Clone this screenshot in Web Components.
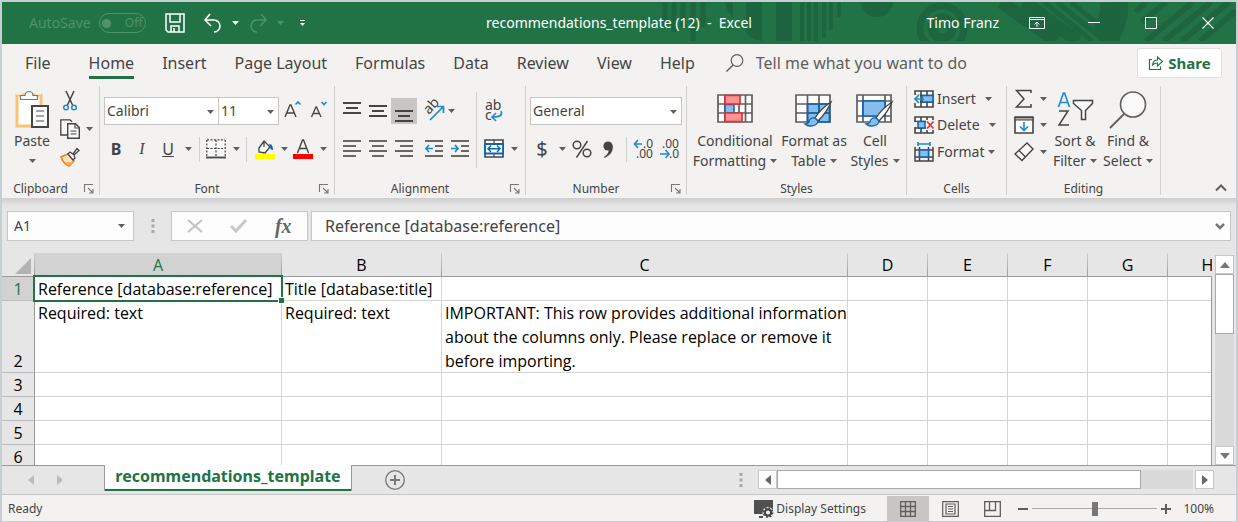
<!DOCTYPE html>
<html lang="en">
<head>
<meta charset="utf-8">
<title>recommendations_template (12) - Excel</title>
<style>
html, body { margin: 0; height: 100%; }
body { font-family: "Noto Sans", "Open Sans", sans-serif; font-size: 14px; line-height: 20px; color: #444; background: #c6d0d2; }
</style>
</head>
<body>
<excel-window></excel-window>
<script>
const BASE = `
  * { box-sizing: border-box; }
  :host { box-sizing: border-box; display: block; }
  :host([hidden]) { display: none; }
  button, select, input { font: inherit; color: inherit; margin: 0; padding: 0; border: 0; background: none; border-radius: 0; outline: none; appearance: none; }
  button { display: flex; align-items: center; justify-content: center; white-space: nowrap; }
`;

function define(name, css, html) {
  const template = document.createElement('template');
  template.innerHTML = `<style>${BASE}${css}</style>${html}`;
  customElements.define(name, class extends HTMLElement {
    constructor() {
      super();
      this.attachShadow({ mode: 'open' }).append(template.content.cloneNode(true));
    }
  });
}

/* Icon drawings: [width, height, markup] */
const G = '#444', L = '#605e5c', B = '#1e8bcd', D = '#0f63b0', F = '#83beec';
const lines = (list, colour) => `<path stroke="${colour}" stroke-width="2" d="${list.map(([x, y, w]) => `M${x} ${y}h${w}`).join('')}"/>`;
const brush = `<path d="M36 10C30 14 23 21 20 26l3 3c4-4 10-11 13-19z" fill="#fff" stroke="${G}" stroke-width="1.3"/><path d="M20 26c-4-1-6 2-6 4-1 2-2 2-4 2 3 3 12 3 13-3z" fill="${F}" stroke="${D}" stroke-width="1.3"/>`;
const ICONS = {
  arrow: [7, 4, `<path d="M0 0h7L3.500 4z" fill="currentColor"/>`],
  save: [20, 20, `<path d="M1 1h18v18H3l-2-2z M5 1v8h10V1 M6 19v-6h8v6 M9 15v4" fill="none" stroke="#fff" stroke-width="1.500"/>`],
  undo: [20, 20, `<path d="M7 1L2 7l6 6M2 7h9a6 6 0 0 1 0 12" fill="none" stroke="currentColor" stroke-width="1.600"/>`],
  redo: [20, 20, `<path d="M13 1l5 6-6 6M18 7H9a6 6 0 0 0 0 12" fill="none" stroke="currentColor" stroke-width="1.400"/>`],
  customize: [7, 6, `<path d="M1 .5h5" stroke="#fff"/><path d="M1 3h5L3.500 6z" fill="#fff"/>`],
  display: [16, 14, `<path d="M.5 1.500h15v11H.5zM.5 3.500h15M8 11V6M5.500 8.500L8 6l2.500 2.500" fill="none" stroke="#fff"/>`],
  min: [12, 12, `<path d="M0 5.500h12" stroke="#fff"/>`],
  max: [12, 12, `<path d="M.5.5h11v11H.5z" fill="none" stroke="#fff"/>`],
  close: [12, 12, `<path d="M.5.5l11 11M11.500.5l-11 11" stroke="#fff" stroke-width="1.200"/>`],
  search: [18, 18, `<circle cx="11" cy="6.500" r="5.800" fill="none" stroke="${L}" stroke-width="1.200"/><path d="M7 11L.5 17.500" stroke="${L}" stroke-width="1.400"/>`],
  share: [16, 16, `<path d="M4 4.500H1.500v10h11v-3" fill="none" stroke="#217346" stroke-width="1.200"/><path d="M4.500 10C5 6.500 7 5 9.500 5V2l5 4.500-5 4.500V8C7.500 8 6 8.500 4.500 10z" fill="none" stroke="#217346" stroke-width="1.100"/>`],
  paste: [34, 40, `<path d="M2 4h24v31H2z" fill="#fff" stroke="#f8c377" stroke-width="3"/><path d="M1 3h6M20 3h6" stroke="#fff"/><path d="M5.500 8.500v-4h4.500a4 4 0 0 1 8 0h4.500v4z" fill="#fafafa" stroke="#777" stroke-width="1.200"/><path d="M17 15h16v21H17z" fill="#fafafa" stroke="${G}" stroke-width="2"/><path d="M21 20h8M21 25h8M21 30h8" stroke="#888" stroke-width="1.300"/>`],
  cut: [16, 20, `<path d="M4 0l6.500 14M12 0L5.500 14" stroke="${G}" stroke-width="1.500"/><circle cx="4" cy="16.500" r="2.300" fill="none" stroke="${B}" stroke-width="1.500"/><circle cx="12" cy="16.500" r="2.300" fill="none" stroke="${B}" stroke-width="1.500"/>`],
  copy: [20, 20, `<path d="M7 16H.8V.8H10l2 2" fill="#fafafa" stroke="${G}" stroke-width="1.300"/><path d="M7.700 4.700h7.800l3.800 3.800v10.800H7.700z" fill="#fafafa" stroke="${G}" stroke-width="1.400"/><path d="M15 5v4h4M10.500 12h6M10.500 15h6" fill="none" stroke="${G}" stroke-width="1.100"/>`],
  painter: [20, 20, `<path d="M1 10l7-3 6 7-5 5c-3-1-6-4-8-9z" fill="#fde3c0" stroke="#ed7d20" stroke-width="1.600"/><path d="M5 15l4 4 4-4z" fill="#f5b55f"/><path d="M8 7l2-2 3 2 4-5.500 2 2L14 8l1 3-2 2z" fill="#fff" stroke="${G}" stroke-width="1.300"/>`],
  grow: [18, 22, `<path d="M1 17L6 5h1l5 12M3 13h7" fill="none" stroke="${G}" stroke-width="1.400"/><path d="M11.500 4.500L14 2l2.500 2.500" fill="none" stroke="${B}" stroke-width="1.700"/>`],
  shrink: [18, 22, `<path d="M1.500 17L6 7h.5L11 17M3 13.500h6.500" fill="none" stroke="${G}" stroke-width="1.300"/><path d="M11.500 2L14 4.500 16.500 2" fill="none" stroke="${B}" stroke-width="1.700"/>`],
  borders: [20, 20, `<path d="M1 1h18v16H1z" fill="#fafafa"/><path d="M1 .8h18M.8 1v16M19.200 1v16M10 1v16M1 9.500h18" stroke="${G}" stroke-width="1.200" stroke-dasharray="2 1.500" fill="none"/><path d="M0 18.500h20" stroke="${G}" stroke-width="1.800"/>`],
  fill: [20, 20, `<path d="M4 9L9 2l6 6-5 6-6-1z M9 2v6" fill="#fafafa" stroke="${G}" stroke-width="1.300"/><path d="M14 5c2 0 4 1 4 6-2 0-3-1-3-4z" fill="${D}"/><path d="M0 15h20v5H0z" fill="#ff0"/>`],
  fontcolour: [20, 20, `<path d="M4.500 14L9.500 1h1l5 13M6.500 9.500h7" fill="none" stroke="${G}" stroke-width="1.400"/><path d="M0 15h20v5H0z" fill="#f00"/>`],
  top: [18, 26, lines([[0, 5, 18], [3, 10, 12], [0, 15, 18]], G)],
  middle: [18, 26, lines([[0, 8, 18], [3, 13, 12], [0, 18, 18]], G)],
  bottom: [18, 26, lines([[0, 13, 18], [3, 18, 12], [0, 23, 18]], G)],
  left: [18, 18, lines([[0, 1, 18], [0, 6, 13], [0, 11, 18], [0, 16, 13]], '#6a6866')],
  centre: [18, 18, lines([[0, 1, 18], [3, 6, 12], [0, 11, 18], [3, 16, 12]], '#6a6866')],
  right: [18, 18, lines([[0, 1, 18], [5, 6, 13], [0, 11, 18], [5, 16, 13]], '#6a6866')],
  outdent: [18, 18, lines([[0, 1, 18], [10, 6, 8], [10, 11, 8], [0, 16, 18]], '#6a6866') + `<path d="M8 8.500H1M4 5L1 8.500 4 12" fill="none" stroke="${B}" stroke-width="1.700"/>`],
  indent: [18, 18, lines([[0, 1, 18], [10, 6, 8], [10, 11, 8], [0, 16, 18]], '#6a6866') + `<path d="M0 8.500h7M4 5l3 3.500L4 12" fill="none" stroke="${B}" stroke-width="1.700"/>`],
  orient: [24, 24, `<text x="0" y="0" font-size="14" fill="${G}" transform="translate(7 16) rotate(-48)">ab</text><path d="M8 21L21 8M15 7.500h6.500V14" fill="none" stroke="${B}" stroke-width="1.700"/>`],
  wrap: [20, 24, `<text x="1" y="11" font-size="14" fill="${G}">ab</text><text x="1" y="21" font-size="14" fill="${G}">c</text><path d="M17 12c2 4-1 6-8 6M12 14l-4 4 4 4" fill="none" stroke="${B}" stroke-width="1.600"/>`],
  merge: [20, 20, `<path d="M1 1h18v17H1z" fill="#fff" stroke="${G}" stroke-width="1.600"/><path d="M10 1v17" stroke="${G}" stroke-width="1.200"/><path d="M1 5h18v9.500H1z" fill="#fff" stroke="${D}" stroke-width="1.800"/><path d="M4 9.700h12M7 6.500L4 9.700 7 13M13 6.500l3 3.200L13 13" fill="none" stroke="${D}" stroke-width="1.400"/>`],
  incdec: [20, 22, `<path d="M9 6H1.500M5 2L1.500 6 5 10" fill="none" stroke="${B}" stroke-width="1.600"/><text x="10" y="10" font-size="12" fill="${G}">.0</text><text x="3" y="20" font-size="12" fill="${G}">.00</text>`],
  decdec: [20, 22, `<path d="M1 16h9M6.500 12l3.500 4-3.500 4" fill="none" stroke="${B}" stroke-width="1.600"/><text x="3" y="10" font-size="12" fill="${G}">.00</text><text x="10" y="20" font-size="12" fill="${G}">.0</text>`],
  comma: [12, 20, `<circle cx="6" cy="7" r="4.600" fill="${G}"/><path d="M10.600 6c1 6-2 10-8 13l-.6-1.200c4-2.300 5-4.800 4.600-8z" fill="${G}"/>`],
  percent: [20, 20, `<circle cx="5" cy="6" r="3.800" fill="none" stroke="${G}" stroke-width="1.500"/><circle cx="15" cy="14" r="3.800" fill="none" stroke="${G}" stroke-width="1.500"/><path d="M15.500 2L4.500 18.500" stroke="${G}" stroke-width="1.400"/>`],
  conditional: [36, 34, `<path d="M1 1h34v27H1zM8 1v27M22 1v27M28.500 1v27M1 10h34M1 19h34" fill="#fff" stroke="${L}" stroke-width="1.700"/><path d="M8 10.500h9V19H8z" fill="${F}" stroke="${D}" stroke-width="1.500"/><path d="M8 1.500h15V10H8zM8 19h17v8.500H8z" fill="#ff9295" stroke="#e03030" stroke-width="1.700"/>`],
  table: [38, 38, `<path d="M1 3h34v27H1z" fill="#fff"/><path d="M13 12h22v18H13z" fill="${F}"/><path d="M1 3h34v27H1zM12.500 3v27M24 3v27M1 12h34M1 21h34" fill="none" stroke="${L}" stroke-width="1.700"/><path d="M24 12v18M13 21h22M12.500 12v18h22V12z" fill="none" stroke="${D}" stroke-width="1.700"/>` + brush],
  cellstyle: [38, 38, `<path d="M1 3h34v27H1zM7 3v27M29 3v27M1 9h34M1 24h34" fill="#fff" stroke="${L}" stroke-width="1.700"/><path d="M7 9h22v15H7z" fill="${F}" stroke="${D}" stroke-width="1.700"/>` + brush],
  insert: [20, 18, `<path d="M1 1h18v16H1zM7 1v16M13 1v16M1 5.500h18M1 12h18" fill="#fff" stroke="${G}" stroke-width="1.600"/><path d="M8 5.500h11V12H8z" fill="${F}" stroke="${D}" stroke-width="1.500"/><path d="M0 5h6v8H0z" fill="#f3f2f1"/><path d="M10 9H1M5 5L1 9l4 4" fill="none" stroke="${B}" stroke-width="1.700"/>`],
  delete: [20, 18, `<path d="M1 1h18v16H1zM7 1v16M13 1v16M1 5.500h18M1 12h18" fill="#fff" stroke="${G}" stroke-width="1.600"/><path d="M12 4h8v10h-8zM0 6h3v5H0z" fill="#f3f2f1"/><path d="M4 5.500h7V12H4z" fill="${F}" stroke="${D}" stroke-width="1.500"/><path d="M13 5.500l6.500 7M19.500 5.500l-6.500 7" stroke="#e03030" stroke-width="1.600"/>`],
  format: [20, 20, `<path d="M4 2h12M4 0v4M16 0v4" stroke="${B}" stroke-width="1.600"/><path d="M1 5v14h18V5M5.500 5v14M14.500 5v14M1 8h18M1 15h18" fill="none" stroke="${G}" stroke-width="1.500"/><path d="M5.500 8h9v7h-9z" fill="${F}" stroke="${D}" stroke-width="1.500"/>`],
  sum: [18, 20, `<path d="M16 4V1.500H1.500L9 10l-7.500 8H16V15" fill="none" stroke="${G}" stroke-width="1.500"/>`],
  filldown: [20, 18, `<path d="M1 1h18v16H1z" fill="#fff" stroke="${G}" stroke-width="1.600"/><path d="M1 1.500h18V4H1z" fill="#aaa" stroke="${G}"/><path d="M10 6v8M6 10.500l4 4 4-4" fill="none" stroke="${B}" stroke-width="1.600"/>`],
  eraser: [20, 20, `<path d="M1 12L13 1l6 6L8 18.500z M5 8.500l6.500 6.500" fill="#fafafa" stroke="${G}" stroke-width="1.400"/>`],
  sort: [36, 40, `<path d="M1.500 16L6.500 2h1l5 14M3.500 11.500h7" fill="none" stroke="${B}" stroke-width="1.700"/><path d="M2 20h9L2 34h10" fill="none" stroke="${G}" stroke-width="1.500"/><path d="M16.500 9.500h19v3l-7 7v9h-4v-9l-8-7z" fill="#fafafa" stroke="${G}" stroke-width="1.500"/>`],
  find: [38, 40, `<circle cx="24" cy="13.500" r="12.500" fill="#fafafa" stroke="${L}" stroke-width="1.600"/><path d="M15 23L1 37" stroke="${L}" stroke-width="1.800"/>`],
  launcher: [10, 10, `<path d="M.5 8V.5H9M4 4l4.500 4.500M9 5v4H5" fill="none" stroke="#777" stroke-width="1.100"/>`],
  collapse: [12, 8, `<path d="M1 6.500L6 1.500l5 5" fill="none" stroke="${L}" stroke-width="2"/>`],
  expand: [10, 6, `<path d="M1 1l4 4 4-4" fill="none" stroke="#777" stroke-width="2.500"/>`],
  cancel: [16, 14, `<path d="M1 1l14 12M15 1L1 13" stroke="#c3c3c3" stroke-width="2"/>`],
  enter: [18, 14, `<path d="M1 7l5 5L16 1" fill="none" stroke="#c8c8c8" stroke-width="3"/>`],
  grip: [4, 14, `<path d="M.5 0h3v3h-3zM.5 5.500h3v3h-3zM.5 11h3v3h-3z" fill="#a8a8a8"/>`],
  corner: [16, 16, `<path d="M16 0v16H0z" fill="#b3b3b3"/>`],
  up: [10, 6, `<path d="M0 6h10L5 0z" fill="#777"/>`],
  down: [10, 6, `<path d="M0 0h10L5 6z" fill="#777"/>`],
  prev: [6, 10, `<path d="M6 0v10L0 5z" fill="currentColor"/>`],
  next: [6, 10, `<path d="M0 0v10l6-5z" fill="currentColor"/>`],
  add: [20, 20, `<circle cx="10" cy="10" r="9.300" fill="none" stroke="#777" stroke-width="1.300"/><path d="M5 10h10M10 5v10" stroke="#777" stroke-width="2"/>`],
  monitor: [20, 18, `<path d="M0 0h19v14H0zM5 16h4v2H5z" fill="#505050"/><circle cx="14" cy="12.500" r="5.500" fill="#f3f2f1"/><circle cx="14" cy="12.500" r="3.200" fill="none" stroke="#444" stroke-width="2.200"/><circle cx="14" cy="12.500" r="4.600" fill="none" stroke="#444" stroke-width="1.600" stroke-dasharray="1.800 1.800"/>`],
  normal: [16, 16, `<path d="M.7.7h14.600v14.600H.7zM5.500.5v15M10.500.5v15M.5 5.500h15M.5 10.500h15" fill="none" stroke="#605e5c" stroke-width="1.300"/>`],
  page: [17, 16, `<path d="M.7.7h15.600v14.600H.7zM4 3h9v10H4zM6 5.500h5M6 8h5M6 10.500h5" fill="none" stroke="#605e5c" stroke-width="1.200"/>`],
  break: [17, 16, `<path d="M.7.7h15.600v14.600H.7zM5.500.5v9M.5 9.500H11.500V.5" fill="none" stroke="#605e5c" stroke-width="1.300"/>`]
};

customElements.define('ui-icon', class extends HTMLElement {
  constructor() {
    super();
    this.attachShadow({ mode: 'open' });
  }
  connectedCallback() {
    const [w, h, body] = ICONS[this.getAttribute('name')];
    this.shadowRoot.innerHTML = `<style>:host{display:block;flex:none}svg{display:block;overflow:visible;font-family:"Noto Sans",sans-serif}</style>
      <svg width="${w}" height="${h}" viewBox="0 0 ${w} ${h}" aria-hidden="true">${body}</svg>`;
  }
});

define('title-bar', `
  :host { position: relative; display: flex; align-items: center; height: 42px; background: #217346; color: #fff; overflow: hidden; }
  .art { position: absolute; right: 0; top: 0; }
  .side { position: relative; flex: 1 1 0; display: flex; align-items: center; }
  .title { position: relative; white-space: pre; }
  .dim { color: #4e9469; }
  .auto { margin-left: 27px; }
  .toggle { width: 47px; height: 20px; margin: 0 16px 0 8px; border: 1px solid #4e9469; border-radius: 10px; color: #4e9469; font-size: 12px; gap: 14px; }
  .toggle::before { content: ""; width: 9px; height: 9px; border-radius: 50%; background: #4e9469; }
  .q { width: 26px; height: 30px; }
  .undo { margin-left: 12px; }
  .a { width: 19px; height: 30px; }
  .right { justify-content: flex-end; }
  .user { margin-right: 9px; }
  .w { width: 57px; height: 42px; }
`, `
  <svg class="art" width="580" height="39" viewBox="0 0 580 39" fill="none" stroke="#1c653f" aria-hidden="true">
    <path stroke-width="5" d="M9 0v25M18 0v30M27 0v25M37 0v39M47 0v25"/>
    <path fill="#1c653f" stroke="none" d="M69 0h8v16q-6-6-8-16zM90 0h16v39q-12-1-16-10zM120 0h16v39h-16zM205 0h32q-2 15-16 15T205 0z"/>
    <path stroke-width="4" d="M146 0v39M153 0v39M160 0v39M168 0v36M175 0v28M183 0v15"/>
    <circle cx="286" cy="26" r="22" stroke-width="7"/>
    <circle cx="286" cy="26" r="10" stroke-width="9"/>
    <path stroke-width="13" d="M345 0l55 39M368 0l54 39"/><path stroke-width="5" d="M388 0l48 39M401 0l48 39M415 0l48 39"/>
    <path stroke-width="28" d="M458 0q2 22-14 39"/>
    <path stroke-width="6" d="M480 10L490 0M486 20L510 0M490 39L537 0M508 39L555 0M526 39L573 0M544 39L580 9"/>
  </svg>
  <div class="side">
    <span class="auto dim">AutoSave</span>
    <button class="toggle" role="switch" aria-checked="false" aria-label="AutoSave">Off</button>
    <button class="q" aria-label="Save"><ui-icon name="save"></ui-icon></button>
    <button class="q undo" aria-label="Undo"><ui-icon name="undo"></ui-icon></button>
    <button class="a" aria-label="Undo history"><ui-icon name="arrow"></ui-icon></button>
    <button class="q dim" aria-label="Redo"><ui-icon name="redo"></ui-icon></button>
    <button class="a dim" aria-label="Redo history"><ui-icon name="arrow"></ui-icon></button>
    <button class="q" aria-label="Customize Quick Access Toolbar"><ui-icon name="customize"></ui-icon></button>
  </div>
  <div class="title">recommendations_template (12)  -  Excel</div>
  <div class="side right">
    <span class="user">Timo Franz</span>
    <button class="w" aria-label="Ribbon Display Options"><ui-icon name="display"></ui-icon></button>
    <button class="w" aria-label="Minimize"><ui-icon name="min"></ui-icon></button>
    <button class="w" aria-label="Maximize"><ui-icon name="max"></ui-icon></button>
    <button class="w" aria-label="Close"><ui-icon name="close"></ui-icon></button>
  </div>
`);

define('ribbon-tabs', `
  :host { display: flex; align-items: center; height: 41px; padding: 0 14px 4px 9px; background: #f3f2f1; font-size: 16px; line-height: 24px; }
  nav { display: flex; }
  a { color: inherit; text-decoration: none; padding: 0 14px; white-space: nowrap; }
  a:first-child { margin-right: 10px; }
  a span { display: block; padding: 5px 0 0; border-bottom: 3px solid transparent; height: 33px; }
  a[aria-current] span { border-color: #217346; }
  .tell { gap: 12px; margin-left: 17px; color: #605e5c; }
  .share { margin-left: auto; width: 85px; height: 30px; gap: 4px; background: #fff; border: 1px solid #e1dfdd; border-radius: 3px; color: #217346; font-weight: 700; font-size: 15px; }
`, `
  <nav>
    <a href="#file"><span>File</span></a><a href="#home" aria-current="page"><span>Home</span></a><a href="#insert"><span>Insert</span></a><a href="#layout"><span>Page Layout</span></a><a href="#formulas"><span>Formulas</span></a><a href="#data"><span>Data</span></a><a href="#review"><span>Review</span></a><a href="#view"><span>View</span></a><a href="#help"><span>Help</span></a>
  </nav>
  <button class="tell"><ui-icon name="search"></ui-icon>Tell me what you want to do</button>
  <button class="share"><ui-icon name="share"></ui-icon>Share</button>
`);

define('ribbon-group', `
  :host { flex: none; display: flex; flex-direction: column; background: linear-gradient(#d2d0ce, #d2d0ce) right top / 1px 109px no-repeat; padding-right: 1px; }
  .body { flex: 1; }
  .foot { display: flex; align-items: center; height: 19px; font-size: 12px; line-height: 16px; }
  .name { flex: 1; text-align: center; }
  .launch { width: 20px; height: 18px; }
  :host(:not([launcher])) .launch { display: none; }
`, `
  <div class="body"><slot></slot></div>
  <div class="foot"><span class="name"><slot name="label"></slot></span><button class="launch" aria-label="Dialog box launcher"><ui-icon name="launcher"></ui-icon></button></div>
`);

define('combo-box', `
  :host { position: relative; display: block; height: 28px; background: #fff; border: 1px solid #c8c6c4; }
  ui-icon { position: absolute; right: 4px; top: 12px; color: #605e5c; pointer-events: none; }
`, `<slot></slot><ui-icon name="arrow"></ui-icon>`);

define('excel-ribbon', `
  :host { display: flex; height: 113px; padding: 1px 0 0; background: #f3f2f1; }
  ui-icon[name=arrow] { color: #605e5c; }
  combo-box select { display: block; width: 100%; height: 26px; padding: 0 2px; }
  .clip { width: 98px; } .font { width: 235px; } .align { width: 191px; } .num { width: 161px; } .styles { width: 220px; } .cells { width: 100px; } .edit { width: 154px; }
  .row { display: grid; align-items: center; height: 28px; }
  .row button { height: 26px; }
  .stack { display: flex; flex-direction: column; gap: 10px; padding: 11px 4px 0; }
  .sep { justify-self: center; width: 1px; height: 25px; background: #d2d0ce; }
  .h { display: flex; }
  .clip .h, .styles .h { padding-left: 4px; }
  .edit .h { padding-left: 3px; }
  .big { flex-direction: column; justify-content: flex-start; padding-top: 5px; }
  .big .pic { display: flex; align-items: center; justify-content: center; height: 40px; }
  .big .line { display: flex; align-items: center; gap: 4px; height: 20px; }
  .small { display: grid; grid-template-columns: 24px 14px; grid-auto-rows: 28px; padding-top: 1px; }
  .font .second { grid-template-columns: 24px 28px 24px 16px 7px 26px 14px 7px 30px 8px 30px 10px; }
  .font .first { grid-template-columns: 115px 60px 28px 24px; }
  .first combo-box + combo-box { margin-left: -1px; }
  .glyph { font-size: 16px; }
  .align .stack > .row { grid-template-columns: 26px 26px 26px 4px 26px 8px; }
  .align .last { padding: 11px 0 0; }
  .align .last .row { grid-template-columns: 28px 12px; }
  .align .tall { height: 76px; width: 1px; background: #d2d0ce; margin: 6px 3px 0 0; }
  .align .stack:first-child { width: 141px; padding-right: 0; }
  .pressed { background: #c8c6c4; }
  .num .row { grid-template-columns: 24px 16px 24px 28px 8px 26px 26px; }
  .cells .list { display: grid; grid-template-rows: 25px 27px 27px; justify-items: start; padding: 0 0 0 7px; }
  .cells button { gap: 3px; }
  .cells ui-icon[name=arrow] { margin-left: 6px; }
  .cells .near ui-icon[name=arrow] { margin-left: 0; }
  .edit .small { grid-template: 25px 27px 27px / 28px 10px; padding: 0; }
  .rest { flex: 1; display: flex; justify-content: flex-end; align-items: flex-end; padding: 0 9px 3px 0; }
`, `
  <ribbon-group class="clip" launcher><span slot="label">Clipboard</span>
    <div class="h">
      <button class="big" style="width:52px"><span class="pic"><ui-icon name="paste"></ui-icon></span><span class="line">Paste</span><span class="line"><ui-icon name="arrow"></ui-icon></span></button>
      <div class="small">
        <button aria-label="Cut"><ui-icon name="cut"></ui-icon></button><span></span>
        <button aria-label="Copy"><ui-icon name="copy"></ui-icon></button><button aria-label="Copy options"><ui-icon name="arrow"></ui-icon></button>
        <button aria-label="Format Painter"><ui-icon name="painter"></ui-icon></button>
      </div>
    </div>
  </ribbon-group>
  <ribbon-group class="font" launcher><span slot="label">Font</span>
    <div class="stack">
      <div class="row first">
        <combo-box><select aria-label="Font"><option>Calibri</option></select></combo-box>
        <combo-box><select aria-label="Font size"><option>11</option></select></combo-box>
        <button aria-label="Increase font size"><ui-icon name="grow"></ui-icon></button>
        <button aria-label="Decrease font size"><ui-icon name="shrink"></ui-icon></button>
      </div>
      <div class="row second">
        <button class="glyph" style="font-weight:700">B</button>
        <button class="glyph" style="font-family:'Liberation Serif',serif;font-style:italic">I</button>
        <button class="glyph" style="text-decoration:underline">U</button>
        <button aria-label="Underline options"><ui-icon name="arrow"></ui-icon></button>
        <span class="sep"></span>
        <button aria-label="Borders"><ui-icon name="borders"></ui-icon></button>
        <button aria-label="Border options"><ui-icon name="arrow"></ui-icon></button>
        <span class="sep"></span>
        <button aria-label="Fill color"><ui-icon name="fill"></ui-icon></button>
        <button aria-label="Fill color options"><ui-icon name="arrow"></ui-icon></button>
        <button aria-label="Font color"><ui-icon name="fontcolour"></ui-icon></button>
        <button aria-label="Font color options"><ui-icon name="arrow"></ui-icon></button>
      </div>
    </div>
  </ribbon-group>
  <ribbon-group class="align" launcher><span slot="label">Alignment</span>
    <div class="h">
      <div class="stack">
        <div class="row">
          <button aria-label="Top align"><ui-icon name="top"></ui-icon></button>
          <button aria-label="Middle align"><ui-icon name="middle"></ui-icon></button>
          <button class="pressed" aria-pressed="true" aria-label="Bottom align"><ui-icon name="bottom"></ui-icon></button>
          <span></span>
          <button aria-label="Orientation"><ui-icon name="orient"></ui-icon></button>
          <button aria-label="Orientation options"><ui-icon name="arrow"></ui-icon></button>
        </div>
        <div class="row">
          <button aria-label="Align left"><ui-icon name="left"></ui-icon></button>
          <button aria-label="Center"><ui-icon name="centre"></ui-icon></button>
          <button aria-label="Align right"><ui-icon name="right"></ui-icon></button>
          <span></span>
          <button aria-label="Decrease indent"><ui-icon name="outdent"></ui-icon></button>
          <button aria-label="Increase indent" style="width:26px"><ui-icon name="indent"></ui-icon></button>
        </div>
      </div>
      <span class="tall"></span>
      <div class="stack last">
        <div class="row"><button aria-label="Wrap text"><ui-icon name="wrap"></ui-icon></button></div>
        <div class="row"><button aria-label="Merge and center"><ui-icon name="merge"></ui-icon></button><button aria-label="Merge options"><ui-icon name="arrow"></ui-icon></button></div>
      </div>
    </div>
  </ribbon-group>
  <ribbon-group class="num" launcher><span slot="label">Number</span>
    <div class="stack">
      <combo-box><select aria-label="Number format"><option>General</option></select></combo-box>
      <div class="row">
        <button style="font-size:20px">$</button>
        <button aria-label="Accounting format options"><ui-icon name="arrow"></ui-icon></button>
        <button aria-label="Percent style"><ui-icon name="percent"></ui-icon></button>
        <button aria-label="Comma style"><ui-icon name="comma"></ui-icon></button>
        <span class="sep"></span>
        <button aria-label="Increase decimal"><ui-icon name="incdec"></ui-icon></button>
        <button aria-label="Decrease decimal"><ui-icon name="decdec"></ui-icon></button>
      </div>
    </div>
  </ribbon-group>
  <ribbon-group class="styles"><span slot="label">Styles</span>
    <div class="h">
      <button class="big" style="width:88px"><span class="pic"><ui-icon name="conditional"></ui-icon></span><span class="line">Conditional</span><span class="line">Formatting <ui-icon name="arrow"></ui-icon></span></button>
      <button class="big" style="width:70px"><span class="pic"><ui-icon name="table"></ui-icon></span><span class="line">Format as</span><span class="line">Table <ui-icon name="arrow"></ui-icon></span></button>
      <button class="big" style="width:52px"><span class="pic"><ui-icon name="cellstyle"></ui-icon></span><span class="line">Cell</span><span class="line">Styles <ui-icon name="arrow"></ui-icon></span></button>
    </div>
  </ribbon-group>
  <ribbon-group class="cells"><span slot="label">Cells</span>
    <div class="list">
      <button><ui-icon name="insert"></ui-icon>Insert <ui-icon name="arrow"></ui-icon></button>
      <button><ui-icon name="delete"></ui-icon>Delete <ui-icon name="arrow"></ui-icon></button>
      <button class="near"><ui-icon name="format"></ui-icon>Format <ui-icon name="arrow"></ui-icon></button>
    </div>
  </ribbon-group>
  <ribbon-group class="edit"><span slot="label">Editing</span>
    <div class="h">
      <div class="small">
        <button aria-label="AutoSum"><ui-icon name="sum"></ui-icon></button><button aria-label="AutoSum options"><ui-icon name="arrow"></ui-icon></button>
        <button aria-label="Fill"><ui-icon name="filldown"></ui-icon></button><button aria-label="Fill options"><ui-icon name="arrow"></ui-icon></button>
        <button aria-label="Clear"><ui-icon name="eraser"></ui-icon></button><button aria-label="Clear options"><ui-icon name="arrow"></ui-icon></button>
      </div>
      <button class="big" style="width:54px"><span class="pic"><ui-icon name="sort"></ui-icon></span><span class="line">Sort &amp;</span><span class="line">Filter <ui-icon name="arrow"></ui-icon></span></button>
      <button class="big" style="width:52px"><span class="pic"><ui-icon name="find"></ui-icon></span><span class="line">Find &amp;</span><span class="line">Select <ui-icon name="arrow"></ui-icon></span></button>
    </div>
  </ribbon-group>
  <div class="rest"><button aria-label="Collapse the ribbon" style="height:14px"><ui-icon name="collapse"></ui-icon></button></div>
`);

define('formula-bar', `
  :host { display: flex; height: 55px; padding: 13px 5px 12px; background: linear-gradient(#cecece, #e6e6e6 8px); }
  .box { display: flex; align-items: center; border: 1px solid #c6c6c6; background: #fdfdfd; }
  .name { width: 127px; padding: 0 8px 0 6px; }
  .name input { flex: 1; min-width: 0; }
  .name button { color: #605e5c; }
  .grip { width: 37px; display: flex; align-items: center; justify-content: center; }
  .tools { width: 137px; justify-content: space-around; padding: 0 2px; }
  .fx { font: italic 700 20px/20px "Liberation Serif", serif; color: #666; }
  .formula { flex: 1; margin-left: 3px; padding: 0 5px 0 13px; }
  .formula input { flex: 1; min-width: 0; font-size: 16px; }
`, `
  <div class="box name"><input aria-label="Name box" value="A1"><button aria-label="Name list"><ui-icon name="arrow"></ui-icon></button></div>
  <span class="grip"><ui-icon name="grip"></ui-icon></span>
  <div class="box tools"><button aria-label="Cancel"><ui-icon name="cancel"></ui-icon></button><button aria-label="Enter"><ui-icon name="enter"></ui-icon></button><button class="fx" aria-label="Insert function">fx</button></div>
  <div class="box formula"><input aria-label="Formula" value="Reference [database:reference]"><button aria-label="Expand formula bar"><ui-icon name="expand"></ui-icon></button></div>
`);

define('scroll-bar', `
  :host { display: flex; }
  :host([vertical]) { flex-direction: column; width: 19px; }
  :host(:not([vertical])) { height: 19px; }
  button { flex: none; width: 19px; height: 19px; background: #fff; border: 1px solid #c6c6c6; color: #666; }
  .track { flex: 1; min-width: 0; min-height: 0; background: #dadada; }
  .thumb { background: #fff; border: 1px solid #aaa; }
  :host([vertical]) .thumb { height: 60px; }
  :host(:not([vertical])) .thumb { height: 19px; width: 364px; }
  :host([vertical]) .x, :host(:not([vertical])) .y { display: none; }
  :host(:not([vertical])) .track { margin-right: 2px; }
`, `
  <button aria-label="Scroll back"><ui-icon class="y" name="up"></ui-icon><ui-icon class="x" name="prev"></ui-icon></button>
  <div class="track"><div class="thumb"></div></div>
  <button aria-label="Scroll forward"><ui-icon class="y" name="down"></ui-icon><ui-icon class="x" name="next"></ui-icon></button>
`);

define('sheet-grid', `
  :host { display: flex; flex: 1; min-height: 0; background: #e6e6e6; padding-right: 2px; }
  .view { flex: 1; min-width: 0; overflow: hidden; position: relative; }
  .view::after { content: ""; position: absolute; right: 0; top: 23px; bottom: 0; width: 1px; background: #999; }
  table { table-layout: fixed; width: 1246px; border-collapse: separate; border-spacing: 0; background: #fff; color: #000; font: 16px/24px "Open Sans", "Noto Sans", sans-serif; }
  th { font-weight: 400; padding: 2px 0 0; line-height: 21px; background: #e6e6e6; border-right: 1px solid #999; border-bottom: 1px solid #bbb; }
  thead th { height: 24px; border: solid; border-image: linear-gradient(#d0d0d0, #999) 1; border-width: 0 1px 1px 0; }
  tbody th { vertical-align: bottom; }
  .on { background: #d2d2d2; color: #217346; }
  td { position: relative; vertical-align: top; padding: 2px 0 0 3px; border-right: 1px solid #d4d4d4; border-bottom: 1px solid #d4d4d4; height: 24px; line-height: 21px; white-space: nowrap; }
  tbody tr { height: 24px; }
  .note td { white-space: normal; padding-top: 0; line-height: 24px; }
  .note p { margin: 0 0 -1px; }
  .sel::after { content: ""; position: absolute; inset: -2px; border: 2px solid #217346; }
  .sel::before { content: ""; position: absolute; z-index: 1; right: -3px; bottom: -3px; width: 5px; height: 5px; background: #217346; border: solid #fff; border-width: 1px 0 0 1px; box-sizing: content-box; }
  .corner ui-icon { float: right; margin: 1px 3px 0 0; }
  scroll-bar { margin: 2px 0 0 3px; }
`, `
  <div class="view"><table>
    <colgroup><col style="width:33px"><col style="width:247px"><col style="width:160px"><col style="width:406px"><col style="width:80px"><col style="width:80px"><col style="width:80px"><col style="width:80px"><col style="width:80px"></colgroup>
    <thead><tr><th class="corner" aria-label="Select all"><ui-icon name="corner"></ui-icon></th><th class="on">A</th><th>B</th><th>C</th><th>D</th><th>E</th><th>F</th><th>G</th><th>H</th></tr></thead>
    <tbody>
      <tr><th class="on">1</th><td class="sel">Reference [database:reference]</td><td>Title [database:title]</td><td></td><td></td><td></td><td></td><td></td><td></td></tr>
      <tr class="note"><th>2</th><td>Required: text</td><td>Required: text</td><td><p>IMPORTANT: This row provides additional information about the columns only. Please replace or remove it before importing.</p></td><td></td><td></td><td></td><td></td><td></td></tr>
      <tr><th>3</th><td></td><td></td><td></td><td></td><td></td><td></td><td></td><td></td></tr>
      <tr><th>4</th><td></td><td></td><td></td><td></td><td></td><td></td><td></td><td></td></tr>
      <tr><th>5</th><td></td><td></td><td></td><td></td><td></td><td></td><td></td><td></td></tr>
      <tr><th>6</th><td></td><td></td><td></td><td></td><td></td><td></td><td></td><td></td></tr>
    </tbody>
  </table></div>
  <scroll-bar vertical></scroll-bar>
`);

define('sheet-tabs', `
  :host { display: flex; flex: none; align-items: flex-start; height: 29px; background: linear-gradient(#999, #999) top / 100% 1px no-repeat #e6e6e6; padding: 0 22px 0 24px; }
  .nav { width: 10px; height: 29px; margin-right: 19px; color: #bbb; }
  .tab { width: 248px; height: 26px; margin-left: 20px; background: #fff; border: solid #999; border-width: 0 1px; box-shadow: inset 0 -2px #217346; color: #217346; font-size: 16px; font-weight: 700; padding-bottom: 4px; }
  .add { width: 20px; height: 29px; margin-left: 33px; }
  .gap { flex: 1; }
  .grip { margin: 8px 15px 0 0; }
  scroll-bar { width: 456px; margin-top: 5px; }
`, `
  <button class="nav" aria-label="Previous sheet"><ui-icon name="prev"></ui-icon></button>
  <button class="nav" aria-label="Next sheet"><ui-icon name="next"></ui-icon></button>
  <button class="tab">recommendations_template</button>
  <button class="add" aria-label="New sheet"><ui-icon name="add"></ui-icon></button>
  <span class="gap"></span>
  <ui-icon class="grip" name="grip"></ui-icon>
  <scroll-bar></scroll-bar>
`);

define('status-bar', `
  :host { display: flex; flex: none; align-items: center; height: 27px; padding: 1px 22px 0 6px; border-top: 1px solid #c6c6c6; background: #f3f2f1; font-size: 12px; line-height: 16px; }
  .ready { flex: 1; }
  .settings { gap: 2px; margin-right: 21px; }
  .view { width: 42px; height: 26px; }
  .on { background: #c8c6c4; }
  .zoom { width: 10px; height: 26px; font-size: 16px; }
  .zoom::before, .plus::after { content: ""; width: 10px; height: 2px; background: #605e5c; }
  .plus { position: relative; }
  .plus::after { position: absolute; transform: rotate(90deg); }
  .minus { margin-left: 5px; }
  input { width: 125px; height: 16px; margin: 0 4px; background: linear-gradient(#a8a8a8, #a8a8a8) center / 100% 1px no-repeat; }
  input::-webkit-slider-thumb { appearance: none; width: 6px; height: 14px; background: #777; }
  .pct { width: 43px; text-align: right; }
`, `
  <span class="ready">Ready</span>
  <button class="settings"><ui-icon name="monitor"></ui-icon>Display Settings</button>
  <button class="view on" aria-label="Normal"><ui-icon name="normal"></ui-icon></button>
  <button class="view" aria-label="Page layout"><ui-icon name="page"></ui-icon></button>
  <button class="view" aria-label="Page break preview"><ui-icon name="break"></ui-icon></button>
  <button class="zoom minus" aria-label="Zoom out"></button>
  <input type="range" min="0" max="200" value="100" aria-label="Zoom">
  <button class="zoom plus" aria-label="Zoom in"></button>
  <span class="pct">100%</span>
`);

define('excel-window', `
  :host { display: flex; flex-direction: column; height: 100vh; border: solid #c6d0d2; border-width: 2px 2px 1px; overflow: hidden; }
  title-bar, ribbon-tabs, excel-ribbon, formula-bar { flex: none; }
`, `
  <title-bar></title-bar>
  <ribbon-tabs></ribbon-tabs>
  <excel-ribbon></excel-ribbon>
  <formula-bar></formula-bar>
  <sheet-grid></sheet-grid>
  <sheet-tabs></sheet-tabs>
  <status-bar></status-bar>
`);
</script>
</body>
</html>
